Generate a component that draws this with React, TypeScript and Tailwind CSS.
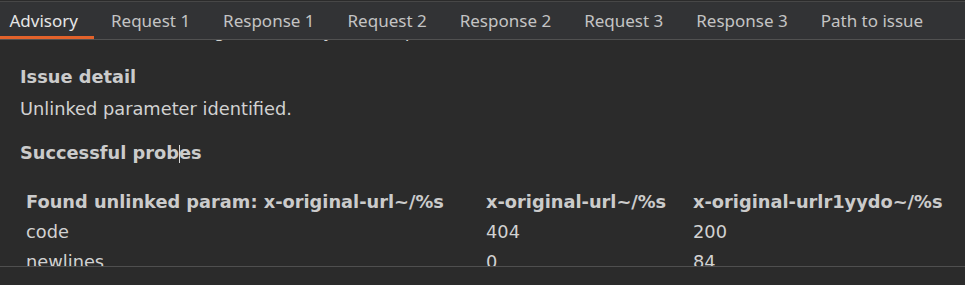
import React from "react";

const tabs = [
  "Advisory",
  "Request 1",
  "Response 1",
  "Request 2",
  "Response 2",
  "Request 3",
  "Response 3",
  "Path to issue",
];

export default function App() {
  return (
    <div className="w-[965px] h-[285px] bg-[#2b2b2b] flex flex-col overflow-hidden">
      <div className="h-px shrink-0 bg-[#2b2b2b]" />
      <div className="h-px shrink-0 bg-[#474747]" />
      <div
        className="h-[37px] shrink-0 bg-[#323335] flex overflow-hidden"
        style={{ fontFamily: '"Noto Sans", sans-serif' }}
      >
        {tabs.map((t, i) => (
          <div
            key={t}
            className={
              "h-[37px] shrink-0 px-[16.5px] pt-[3px] border-b-[3px] flex items-center text-[17px] leading-[23px] whitespace-nowrap " +
              (i === 0
                ? "ml-[-7px] border-[#e2622b] text-[#e6e6e6]"
                : "border-transparent text-[#c4c4c4]")
            }
          >
            {t}
          </div>
        ))}
      </div>
      <div className="h-px shrink-0 bg-[#515151]" />
      <div
        className="flex-1 min-h-0 overflow-hidden text-[17.8px] text-[#d2d2d2]"
        style={{ fontFamily: '"DejaVu Sans", sans-serif' }}
      >
        <div className="flex flex-col mt-[-24px] pl-[20px]">
          <div className="leading-[30px] whitespace-nowrap">
            <span className="font-bold">Note:</span> This issue was generated by the Burp extension: Param Miner.
          </div>
          <div className="leading-[30px] mt-[16px] font-bold text-[#cbcbcb]">Issue detail</div>
          <div className="leading-[30px] mt-[2px]">Unlinked parameter identified.</div>
          <div className="leading-[30px] mt-[14px] font-bold text-[#cbcbcb]">
            Successful prob
            <span className="relative inline-block w-0 h-0">
              <span className="absolute left-0 top-[-14px] w-px h-[18px] bg-[#d8d8d8]" />
            </span>
            es
          </div>
          <div className="mt-[19px] pl-[6px] grid grid-cols-[460px_207px_1fr] leading-[30px] whitespace-nowrap">
            <div className="font-bold text-[#cbcbcb]">Found unlinked param: x-original-url~/%s</div>
            <div className="font-bold text-[#cbcbcb]">x-original-url~/%s</div>
            <div className="font-bold text-[#cbcbcb]">x-original-urlr1yydo~/%s</div>
            <div>code</div>
            <div>404</div>
            <div>200</div>
            <div>newlines</div>
            <div>0</div>
            <div>84</div>
          </div>
        </div>
      </div>
      <div className="h-px shrink-0 bg-[#4f4f4f]" />
      <div className="h-[18px] shrink-0 bg-[#2b2b2b]" />
    </div>
  );
}
